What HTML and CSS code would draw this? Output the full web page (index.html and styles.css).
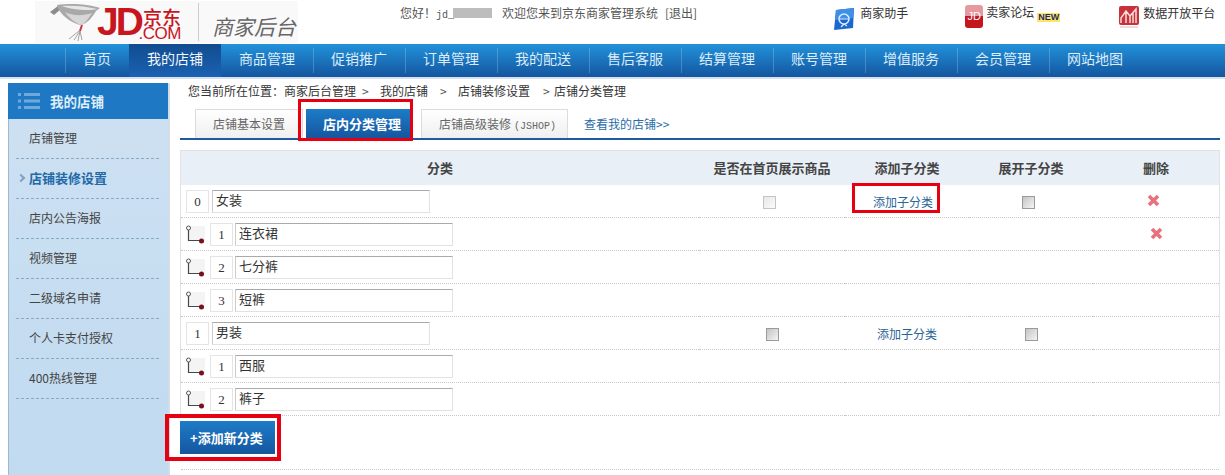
FILE: index.html
```html
<!DOCTYPE html>
<html lang="zh-CN">
<head>
<meta charset="utf-8">
<title>商家后台</title>
<link rel="stylesheet" href="styles.css">
</head>
<body>
<header class="top">
  <div class="logo">
    <svg class="bird" width="50" height="38" viewBox="0 0 50 38">
      <path d="M0 9 L8 3 L11 6 L4 12 Z" fill="#8d8d8d"/>
      <path d="M7 2 C20 0 38 1 50 5 L46 8 C42 15 37 20 32 22 C25 22 14 15 9 7 Z" fill="#a9a9a9"/>
      <path d="M12 3 C22 2 36 3 47 6 C40 8 22 7 12 3 Z" fill="#e6e6e6"/>
      <path d="M15 9 C22 13 34 13 42 10 C38 16 35 20 32 22 C26 21 19 15 15 9 Z" fill="#d6d6d6"/>
      <path d="M32 22 L30 28" stroke="#c5373f" stroke-width="2"/>
      <path d="M30 28 L24 37 M30 28 L28 38 M30 28 L32 37 M29 28 L19 36" stroke="#a2a2a2" stroke-width="1"/>
    </svg>
    <span class="logo-jd">JD</span>
    <span class="logo-cn">
      <span class="logo-dong">京东</span>
      <span class="logo-com">.COM</span>
    </span>
    <span class="logo-sep"></span>
    <span class="logo-title">商家后台</span>
  </div>
  <div class="welcome">
    <span>您好！<span class="latin">jd_</span></span>
    <span class="masked"></span>
    <span class="welcome-text">欢迎您来到京东商家管理系统</span>
    <span class="logout">[退出]</span>
  </div>
  <a class="tool tool-helper">
    <svg width="21" height="24" viewBox="0 0 21 24">
      <path d="M3 2 L21 0 L20 20 L1 22 Z" fill="#1c66d0"/>
      <path d="M3 2 L21 0 L20 10 L2 12 Z" fill="#3f8fe6"/>
      <circle cx="11" cy="11" r="5" fill="none" stroke="#d8ecff" stroke-width="1.6"/>
      <path d="M7 11 L15 11 M11 16 L8 19 M11 16 L14 18" stroke="#d8ecff" stroke-width="1.2"/>
    </svg>
    <span>商家助手</span>
  </a>
  <a class="tool tool-forum">
    <span class="jd-badge">JD</span>
    <span>卖家论坛</span>
    <span class="new-tag">NEW</span>
  </a>
  <a class="tool tool-data">
    <svg width="20" height="22" viewBox="0 0 20 22">
      <rect x="0" y="0" width="20" height="19" rx="2" fill="#c8323a"/>
      <path d="M2 17 L2 12 L7 5 L11 10 L17 3 L17 17 M7 6 L7 17 M11 10 L11 17 M14 7 L14 17" fill="none" stroke="#f7dada" stroke-width="1.5"/>
      <rect x="1" y="20" width="18" height="2" fill="#eedcdc"/>
    </svg>
    <span>数据开放平台</span>
  </a>
</header>

<nav class="nav">
  <a class="nav-item nav-home">首页</a>
  <a class="nav-item nav-active">我的店铺</a>
  <a class="nav-item">商品管理</a>
  <a class="nav-item">促销推广</a>
  <a class="nav-item">订单管理</a>
  <a class="nav-item">我的配送</a>
  <a class="nav-item">售后客服</a>
  <a class="nav-item">结算管理</a>
  <a class="nav-item">账号管理</a>
  <a class="nav-item">增值服务</a>
  <a class="nav-item">会员管理</a>
  <a class="nav-item">网站地图</a>
</nav>

<div class="page">
  <aside class="side">
    <div class="side-head">
      <svg width="22" height="16" viewBox="0 0 22 16">
        <path d="M0 1.5 H3 M6 1.5 H22 M0 8 H3 M6 8 H22 M0 14.5 H3 M6 14.5 H22" stroke="#6fa9dc" stroke-width="3"/>
      </svg>
      <span>我的店铺</span>
    </div>
    <a class="side-item">店铺管理</a>
    <a class="side-item side-active"><i class="side-arrow"></i>店铺装修设置</a>
    <a class="side-item">店内公告海报</a>
    <a class="side-item">视频管理</a>
    <a class="side-item">二级域名申请</a>
    <a class="side-item">个人卡支付授权</a>
    <a class="side-item">400热线管理</a>
  </aside>

  <main class="main">
    <div class="crumbs">
      <span class="crumb-here">您当前所在位置：</span>
      <span>商家后台管理</span><span class="crumb-sep">&gt;</span>
      <span>我的店铺</span><span class="crumb-sep crumb-sep-wide">&gt;</span>
      <span>店铺装修设置</span><span class="crumb-sep crumb-sep-last">&gt;</span>
      <span>店铺分类管理</span>
    </div>

    <div class="tabs">
      <a class="tab">店铺基本设置</a>
      <a class="tab tab-on">店内分类管理<span class="mark mark-tab"></span></a>
      <a class="tab tab-adv">店铺高级装修<span class="tab-latin">(JSHOP)</span></a>
      <a class="tab-link">查看我的店铺&gt;&gt;</a>
    </div>

    <div class="grid-box">
      <table class="grid">
        <colgroup>
          <col class="col-name"><col class="col-show"><col class="col-act"><col class="col-act"><col class="col-del">
        </colgroup>
        <thead>
          <tr>
            <th>分类</th><th>是否在首页展示商品</th><th>添加子分类</th><th>展开子分类</th><th>删除</th>
          </tr>
        </thead>
        <tbody>
          <tr class="row-first">
            <td><div class="cat"><span class="num">0</span><span class="field">女装</span></div></td>
            <td><span class="cb cb-light"></span></td>
            <td><a class="add-sub">添加子分类<span class="mark mark-sub"></span></a></td>
            <td><span class="cb"></span></td>
            <td><svg class="del" width="13" height="13" viewBox="0 0 13 13"><path d="M2 2 L11 11 M11 2 L2 11" stroke="#e9717d" stroke-width="3.6"/></svg></td>
          </tr>
          <tr>
            <td><div class="cat"><svg class="tree" width="19" height="22" viewBox="0 0 19 22"><rect x="3" y="3" width="16" height="15" fill="#f4f4f4"/><circle cx="2.5" cy="5" r="2" fill="#fff" stroke="#555"/><path d="M2.5 7 V17.5 H14" fill="none" stroke="#3d4a52" stroke-width="1.2"/><circle cx="15.5" cy="18" r="2.5" fill="#7a1018"/></svg><span class="num">1</span><span class="field">连衣裙</span></div></td>
            <td></td><td></td><td></td>
            <td><svg class="del" width="13" height="13" viewBox="0 0 13 13"><path d="M2 2 L11 11 M11 2 L2 11" stroke="#e9717d" stroke-width="3.6"/></svg></td>
          </tr>
          <tr>
            <td><div class="cat"><svg class="tree" width="19" height="22" viewBox="0 0 19 22"><rect x="3" y="3" width="16" height="15" fill="#f4f4f4"/><circle cx="2.5" cy="5" r="2" fill="#fff" stroke="#555"/><path d="M2.5 7 V17.5 H14" fill="none" stroke="#3d4a52" stroke-width="1.2"/><circle cx="15.5" cy="18" r="2.5" fill="#7a1018"/></svg><span class="num">2</span><span class="field">七分裤</span></div></td>
            <td></td><td></td><td></td><td></td>
          </tr>
          <tr>
            <td><div class="cat"><svg class="tree" width="19" height="22" viewBox="0 0 19 22"><rect x="3" y="3" width="16" height="15" fill="#f4f4f4"/><circle cx="2.5" cy="5" r="2" fill="#fff" stroke="#555"/><path d="M2.5 7 V17.5 H14" fill="none" stroke="#3d4a52" stroke-width="1.2"/><circle cx="15.5" cy="18" r="2.5" fill="#7a1018"/></svg><span class="num">3</span><span class="field">短裤</span></div></td>
            <td></td><td></td><td></td><td></td>
          </tr>
          <tr class="row-parent">
            <td><div class="cat"><span class="num">1</span><span class="field">男装</span></div></td>
            <td><span class="cb"></span></td>
            <td><a class="add-sub">添加子分类</a></td>
            <td><span class="cb"></span></td>
            <td></td>
          </tr>
          <tr>
            <td><div class="cat"><svg class="tree" width="19" height="22" viewBox="0 0 19 22"><rect x="3" y="3" width="16" height="15" fill="#f4f4f4"/><circle cx="2.5" cy="5" r="2" fill="#fff" stroke="#555"/><path d="M2.5 7 V17.5 H14" fill="none" stroke="#3d4a52" stroke-width="1.2"/><circle cx="15.5" cy="18" r="2.5" fill="#7a1018"/></svg><span class="num">1</span><span class="field">西服</span></div></td>
            <td></td><td></td><td></td><td></td>
          </tr>
          <tr>
            <td><div class="cat"><svg class="tree" width="19" height="22" viewBox="0 0 19 22"><rect x="3" y="3" width="16" height="15" fill="#f4f4f4"/><circle cx="2.5" cy="5" r="2" fill="#fff" stroke="#555"/><path d="M2.5 7 V17.5 H14" fill="none" stroke="#3d4a52" stroke-width="1.2"/><circle cx="15.5" cy="18" r="2.5" fill="#7a1018"/></svg><span class="num">2</span><span class="field">裤子</span></div></td>
            <td></td><td></td><td></td><td></td>
          </tr>
        </tbody>
      </table>
    </div>

    <div class="actions">
      <a class="add-btn">+添加新分类<span class="mark mark-btn"></span></a>
    </div>
    <div class="foot-line"></div>
  </main>
</div>
</body>
</html>
```
FILE: styles.css
```css
* { box-sizing: border-box; }
html, body { margin: 0; padding: 0; height: 475px; overflow: hidden; }
body {
  background: #fff;
  color: #444;
  font: 12px/1.4 "Noto Sans CJK SC", "Noto Sans", sans-serif;
}
a { color: inherit; text-decoration: none; }

/* header */
.top { display: flex; height: 44px; align-items: flex-start; }
.logo {
  display: flex;
  align-items: flex-start;
  flex: none;
  width: 263px;
  height: 42px;
  margin: 1px 0 0 35px;
  padding-left: 15px;
  background: #f9f9f9;
}
.bird { margin-top: 2px; flex: none; }
.logo-jd {
  flex: none;
  width: 42px;
  margin: 1px 0 0 -3px;
  color: #c8161e;
  font: 700 39px/40px "Liberation Sans", sans-serif;
  letter-spacing: -3px;
}
.logo-cn { display: flex; flex: none; flex-direction: column; align-items: flex-end; width: 42px; margin-top: 6px; }
.logo-dong { color: #c8161e; font-size: 19px; font-weight: 500; line-height: 20px; }
.logo-com { color: #c8161e; font: 400 17px/13px "Liberation Sans", sans-serif; letter-spacing: -.5px; }
.logo-sep { flex: none; width: 1px; height: 38px; margin: 2px 13px 0 17px; background: #ccc; }
.logo-title { margin-top: 11px; color: #666; font-size: 21px; font-style: italic; line-height: 28px; white-space: nowrap; }

.welcome { display: flex; align-items: center; height: 14px; margin: 6px 0 0 102px; color: #555; white-space: nowrap; }
.latin { font: 10px "Liberation Mono", monospace; }
.masked { width: 39px; height: 10px; background: #bdbdbd; margin-left: -1px; }
.welcome-text { margin-left: 10px; }
.logout { margin-left: 7px; }

.tool { display: flex; align-items: flex-start; color: #333; white-space: nowrap; }
.tool-helper { gap: 6px; margin: 8px 0 0 136px; }
.tool-helper span { margin-top: -3px; }
.tool-forum { gap: 3px; margin: 5px 0 0 57px; }
.tool-forum span:nth-child(2) { margin-top: -1px; }
.jd-badge {
  width: 18px;
  height: 23px;
  border-radius: 3px;
  background: linear-gradient(#e69aa0 50%, #c5161f 50%);
  color: #fff;
  font: 11px/23px "Liberation Sans", sans-serif;
  text-align: center;
}
.new-tag {
  margin: 8px 0 0;
  padding: 0 1px;
  background: #ffe566;
  color: #1b2a66;
  font: 700 9px/9px "Liberation Sans", sans-serif;
}
.tool-data { gap: 4px; margin: 6px 0 0 59px; }
.tool-data span { margin-top: -1px; }

/* nav */
.nav {
  display: flex;
  height: 35px;
  padding-left: 65px;
  border-bottom: 2px solid #d8e2ec;
  background: linear-gradient(#2192da, #14559f);
}
.nav-item {
  width: 92px;
  background: linear-gradient(rgba(255,255,255,.2), rgba(255,255,255,.2)) left center / 1px 25px no-repeat;
  color: #dcecf9;
  font-size: 14px;
  line-height: 28px;
  text-align: center;
}
.nav-home { width: 64px; }
.nav-active {
  background: linear-gradient(#114c90, #1b62b2);
  color: #f2f8fd;
}
.nav-active + .nav-item { background: none; }

/* page */
.page { display: flex; align-items: flex-start; }
.side {
  flex: none;
  width: 162px;
  height: 400px;
  margin: 4px 0 0 8px;
  border-left: 1px solid #9dbad2;
  border-right: 2px solid #d5dde4;
  background: linear-gradient(#cee1f2, #c0daf0);
}
.side-head {
  display: flex;
  align-items: center;
  gap: 10px;
  height: 36px;
  margin-left: -1px;
  padding-left: 10px;
  background: #1e78c4;
  color: #dfeefa;
  font-size: 13.5px;
  font-weight: 700;
}
.side-item {
  display: flex;
  align-items: center;
  height: 40px;
  margin: 0 9px 0 7px;
  padding: 0 0 1px 13px;
  border-bottom: 1px dashed #8aa9c4;
  color: #444;
}
.side-active { color: #2369a8; font-size: 13px; font-weight: 700; }
.side-arrow {
  width: 6px;
  height: 6px;
  margin: 0 5px 0 -11px;
  border-top: 2px solid #7fa3c0;
  border-right: 2px solid #7fa3c0;
  transform: rotate(45deg);
}

.main { flex: none; width: 1040px; margin-left: 10px; }
.crumbs { display: flex; height: 20px; margin-top: 2px; padding-left: 8px; align-items: center; color: #333; white-space: nowrap; }
.crumb-sep { width: 24px; padding-left: 6px; color: #555; }
.crumb-sep-wide { width: 30px; padding-left: 12px; }
.crumb-sep-last { padding-left: 13px; }

.tabs {
  display: flex;
  height: 31px;
  margin-top: 8px;
  padding-left: 15px;
  border-bottom: 2px solid #1f5a9e;
}
.tab {
  position: relative;
  height: 29px;
  padding: 0 17px;
  border: 1px solid #dcdcdc;
  border-bottom: 0;
  background: linear-gradient(#fff, #efefef);
  color: #666;
  line-height: 27px;
  white-space: nowrap;
}
.tab-on {
  width: 104px;
  margin-left: 3px;
  padding: 0 0 0 17px;
  border: 0;
  background: linear-gradient(#1d7cc8, #15569f);
  color: #fff;
  font-size: 13px;
  font-weight: 700;
  line-height: 29px;
}
.tab-adv { margin-left: 11px; width: 147px; }
.tab-latin { margin-left: 3px; font: 10px "Liberation Mono", monospace; }
.tab-link { margin-left: 16px; color: #2a6ca8; line-height: 29px; }

.mark { position: absolute; border: 3px solid #e60012; pointer-events: none; }
.mark-tab { left: -8px; top: -10px; width: 115px; height: 42px; }
.mark-sub { left: -21px; top: -9px; width: 88px; height: 30px; }
.mark-btn { left: -15px; top: -7px; width: 116px; height: 47px; border-width: 4px; }

.grid-box {
  margin-top: 10px;
  border: 1px solid #e2e2e2;
  border-bottom: 0;
}
.grid { width: 1038px; border-collapse: separate; border-spacing: 0; table-layout: fixed; }
.col-name { width: 518px; }
.col-show { width: 146px; }
.col-act { width: 124px; }
.col-del { width: 126px; }
.grid th {
  height: 34px;
  padding: 0;
  background: #e8eff6;
  color: #444;
  font-size: 13px;
  font-weight: 700;
}
.grid td {
  height: 33px;
  padding: 5px 0 4px;
  border-bottom: 1px dotted #c8c8c8;
  text-align: center;
  vertical-align: middle;
  line-height: 0;
}
.cat { display: flex; align-items: flex-start; height: 23px; padding-left: 5px; text-align: left; }
.tree { flex: none; margin-right: 5px; }
.num {
  flex: none;
  width: 23px;
  height: 23px;
  margin-right: 2px;
  border: 1px solid #e4e4e4;
  color: #333;
  font: 13px/21px "Liberation Serif", serif;
  text-align: center;
}
.row-first .num, .row-parent .num { margin-right: 3px; }
.field {
  flex: none;
  width: 218px;
  height: 23px;
  padding-left: 3px;
  border: 1px solid #e2e2e2;
  border-top-color: #aaa;
  border-left-color: #ccc;
  color: #333;
  font-size: 13px;
  line-height: 18px;
}
.cb {
  display: inline-block;
  width: 13px;
  height: 13px;
  margin-top: 2px;
  border: 1px solid #9a9a9a;
  background: linear-gradient(135deg, #c4c4c4, #f4f4f4);
}
.cb-light { border-color: #c4c4c4; background: linear-gradient(135deg, #e8e8e8, #fafafa); }
.row-first .cb { margin-right: 5px; }
.add-sub { position: relative; display: inline-block; color: #2a6496; line-height: 20px; }
.row-first .add-sub { margin-right: 8px; }
.del { display: inline-block; margin-top: -2px; }
.row-first .del { margin-right: 6px; }

.actions { padding-top: 5px; }
.add-btn {
  position: relative;
  display: block;
  width: 95px;
  height: 33px;
  padding-left: 10px;
  background: linear-gradient(#1d7cc8, #15569f);
  color: #fff;
  font-size: 13px;
  font-weight: 700;
  line-height: 33px;
}
.foot-line { margin: 15px 0 0 1px; width: 1038px; border-top: 1px dotted #c8c8c8; }
```
